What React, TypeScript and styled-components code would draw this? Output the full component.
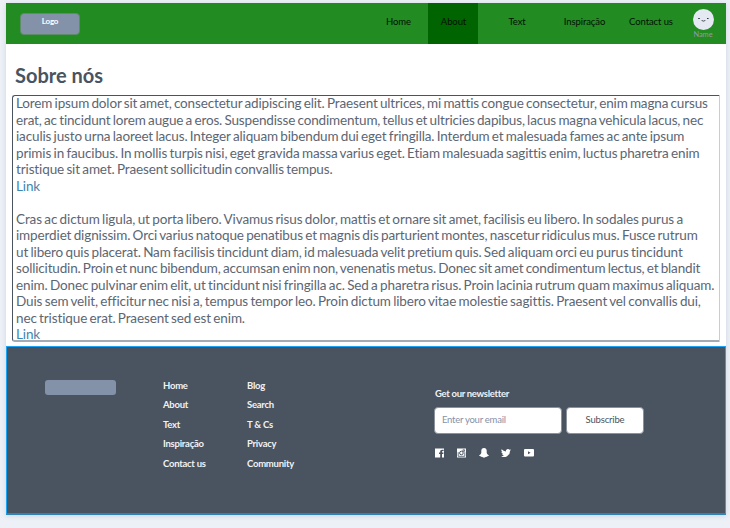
import React from "react";
import styled, { createGlobalStyle } from "styled-components";

const GlobalStyle = createGlobalStyle`
  * { box-sizing: border-box; }
  body { margin: 0; background: #edf1f7; font-family: Lato, "Liberation Sans", sans-serif; color: #4a5360; }
  #root { height: 528px; overflow: hidden; }
  a { text-decoration: none; color: inherit; }
`;

const Page = styled.div`
  width: 720px;
  height: 512px;
  margin: 3px 0 0 6px;
  display: flex;
  flex-direction: column;
  background: #fff;
  box-shadow: 0 1px 5px rgba(100, 115, 150, 0.22);
`;

const Header = styled.header`
  height: 41px;
  flex: none;
  display: flex;
  background: #228b22;
`;

const Logo = styled.div`
  width: 60px;
  height: 22px;
  margin: 10px 0 0 14px;
  border: 1px solid #5c8c68;
  border-radius: 4px;
  background: #8492a9;
  color: #fff;
  font-size: 8px;
  font-weight: 700;
  line-height: 15px;
  text-align: center;
  letter-spacing: -0.2px;
`;

const Nav = styled.nav`
  display: flex;
  margin-left: 288px;
`;

const NavItem = styled.a<{ $width: number; $active?: boolean }>`
  width: ${(p) => p.$width}px;
  height: 41px;
  padding-left: 1px;
  line-height: 37px;
  font-size: 9.5px;
  letter-spacing: -0.1px;
  text-align: center;
  color: #031203;
  background: ${(p) => (p.$active ? "#006400" : "transparent")};
`;

const User = styled.div`
  width: 30px;
  margin: 6px 0 0 0;
  display: flex;
  flex-direction: column;
  align-items: center;
  font-size: 7.4px;
  line-height: 9px;
  color: #8c9bb0;
`;

const Title = styled.h1`
  margin: 18px 0 0 9px;
  height: 33px;
  font-size: 20px;
  line-height: 26px;
  font-weight: 700;
`;

const TextBox = styled.article`
  width: 708px;
  height: 247px;
  margin-left: 6px;
  padding: 0 0 0 3px;
  border: 1px solid #4a5360;
  border-right-color: #c9cdd3;
  border-bottom: 2px solid #a5abb3;
  border-radius: 3px 1px 1px 3px;
  font-size: 13.5px;
  line-height: 15.4px;
  word-spacing: -1px;
  color: #5c6673;
`;

const Line = styled.span<{ $spacing?: number }>`
  display: block;
  width: max-content;
  height: 16.53px;
  white-space: nowrap;
  letter-spacing: ${(p) => p.$spacing ?? -0.12}px;
`;

const TextLink = styled.a`
  display: block;
  height: 16.53px;
  letter-spacing: -0.12px;
  && { color: #3d86b0; }
`;

const Footer = styled.footer`
  height: 169px;
  margin-top: auto;
  flex: none;
  display: flex;
  background: #4a5360;
  border: 1px solid #1ea4f4;
  border-bottom: 2px solid #3182b5;
  color: #f0f2f5;
  font-size: 9.5px;
`;

const FooterLogo = styled.div`
  width: 71px;
  height: 15px;
  margin: 33px 0 0 38px;
  border-radius: 3px;
  background: #8492a9;
`;

const LinkColumn = styled.nav<{ $left: number; $width: number }>`
  width: ${(p) => p.$width}px;
  margin: 28.7px 0 0 ${(p) => p.$left}px;
  display: flex;
  flex-direction: column;
  font-weight: 700;
  line-height: 19.6px;
  letter-spacing: -0.25px;
`;

const Newsletter = styled.section`
  margin: 40px 0 0 103px;
`;

const Label = styled.div`
  margin-left: 1px;
  line-height: 14px;
  font-weight: 700;
  letter-spacing: -0.3px;
`;

const Form = styled.div`
  display: flex;
  gap: 4px;
  margin-top: 6px;
`;

const Email = styled.input`
  width: 128px;
  height: 27px;
  padding: 0 7px 2px;
  border: 1px solid #8b929c;
  border-radius: 4px;
  background: #fff;
  font: 9.5px Lato, sans-serif;
  letter-spacing: -0.25px;
  outline: none;
  &::placeholder { color: #8492a9; opacity: 1; }
`;

const Subscribe = styled.button`
  width: 78px;
  height: 27px;
  padding: 0 0 2px;
  border: 1px solid #8b929c;
  border-radius: 4px;
  background: #fff;
  color: #4a5360;
  font: 9.5px Lato, sans-serif;
  letter-spacing: -0.18px;
`;

const Social = styled.div`
  display: flex;
  justify-content: space-between;
  width: 99px;
  margin: 14px 0 0 1px;
  svg { display: block; }
`;

const nav = [
  { label: "Home", width: 60 },
  { label: "About", width: 50, active: true },
  { label: "Text", width: 77 },
  { label: "Inspiração", width: 58 },
  { label: "Contact us", width: 75 },
];

const first = [
  { text: "Lorem ipsum dolor sit amet, consectetur adipiscing elit. Praesent ultrices, mi mattis congue consectetur, enim magna cursus", spacing: -0.144 },
  { text: "erat, ac tincidunt lorem augue a eros. Suspendisse condimentum, tellus et ultricies dapibus, lacus magna vehicula lacus, nec", spacing: -0.149 },
  { text: "iaculis justo urna laoreet lacus. Integer aliquam bibendum dui eget fringilla. Interdum et malesuada fames ac ante ipsum", spacing: -0.134 },
  { text: "primis in faucibus. In mollis turpis nisi, eget gravida massa varius eget. Etiam malesuada sagittis enim, luctus pharetra enim" },
  { text: "tristique sit amet. Praesent sollicitudin convallis tempus." },
];
const second = [
  { text: "Cras ac dictum ligula, ut porta libero. Vivamus risus dolor, mattis et ornare sit amet, facilisis eu libero. In sodales purus a", spacing: -0.1 },
  { text: "imperdiet dignissim. Orci varius natoque penatibus et magnis dis parturient montes, nascetur ridiculus mus. Fusce rutrum" },
  { text: "ut libero quis placerat. Nam facilisis tincidunt diam, id malesuada velit pretium quis. Sed aliquam orci eu purus tincidunt" },
  { text: "sollicitudin. Proin et nunc bibendum, accumsan enim non, venenatis metus. Donec sit amet condimentum lectus, et blandit", spacing: -0.165 },
  { text: "enim. Donec pulvinar enim elit, ut tincidunt nisi fringilla ac. Sed a pharetra risus. Proin lacinia rutrum quam maximus aliquam.", spacing: -0.115 },
  { text: "Duis sem velit, efficitur nec nisi a, tempus tempor leo. Proin dictum libero vitae molestie sagittis. Praesent vel convallis dui,", spacing: -0.115 },
  { text: "nec tristique erat. Praesent sed est enim." },
];

const Avatar = () => (
  <svg width="21" height="21" viewBox="0 0 21 21">
    <circle cx="10.5" cy="10.5" r="10.5" fill="#e4e9f2" />
    <path d="M5.2 9.5h1.6M14 9.5h1.6" stroke="#30363e" strokeWidth="1.2" />
    <path d="M8.7 11c.4 1.5 3.1 1.5 3.6 0" fill="none" stroke="#30363e" strokeWidth=".9" />
  </svg>
);

const Facebook = () => (
  <svg width="9" height="10" viewBox="0 0 9 10" fill="#fff">
    <path d="M0 .5h9v9H7V6h1.3l.2-1.5H7v-.8c0-.5.2-.7.8-.7h.8V1.7H7.2C5.9 1.7 5.2 2.4 5.2 3.5v1H4V6h1.2v3.5H0z" />
  </svg>
);
const Instagram = () => (
  <svg width="9" height="10" viewBox="0 0 9 10">
    <path d="M0 .5h9v9H0z" fill="#fff" />
    <path d="M1.2 4.2v4.1h6.6V4.2M5.9 1.8h1.7v1.5H5.9z" fill="none" stroke="#4a5360" strokeWidth=".8" />
    <circle cx="4.4" cy="5" r="1.8" fill="none" stroke="#4a5360" strokeWidth="1" />
  </svg>
);
const Snapchat = () => (
  <svg width="10" height="10" viewBox="0 0 10 10" fill="#fff">
    <path d="M5 0C3.2 0 2.3 1.2 2.3 2.7v2C2.1 6 1.3 6.7.3 7.2c-.4.4.3.8 1.1.9.2.8.5.9 1.3.7C3.5 8.7 4 9.7 5 9.7s1.5-1 2.3-.9c.8.2 1.1.1 1.3-.7.8-.1 1.5-.5 1.1-.9-1-.5-1.8-1.2-2-2.5v-2C7.7 1.2 6.8 0 5 0z" />
  </svg>
);
const Twitter = () => (
  <svg width="10" height="10" viewBox="0 0 24 24" fill="#fff">
    <path d="M24 4.6c-.9.4-1.8.7-2.8.8 1-.6 1.8-1.6 2.2-2.7-1 .6-2 1-3.1 1.2A4.9 4.9 0 0 0 11.9 8.4 14 14 0 0 1 1.7 3.2a4.9 4.9 0 0 0 1.5 6.5c-.8 0-1.6-.2-2.2-.6v.1c0 2.3 1.6 4.3 3.9 4.8-.7.2-1.5.2-2.2.1.6 2 2.4 3.4 4.6 3.4A9.9 9.9 0 0 1 0 19.5 14 14 0 0 0 21.5 7.1c1-.7 1.8-1.6 2.5-2.5z" />
  </svg>
);
const Youtube = () => (
  <svg width="10" height="10" viewBox="0 0 10 10">
    <rect y="1" width="10" height="7.5" rx="1" fill="#fff" />
    <path d="M4 3.2v3l2.6-1.5z" fill="#4a5360" />
  </svg>
);

export default function App() {
  return (
    <>
      <GlobalStyle />
      <Page>
        <Header>
          <Logo>Logo</Logo>
          <Nav>
            {nav.map((n) => (
              <NavItem key={n.label} $width={n.width} $active={n.active}>{n.label}</NavItem>
            ))}
          </Nav>
          <User><Avatar />Name</User>
        </Header>
        <Title>Sobre nós</Title>
        <TextBox>
          {first.map((l) => <Line key={l.text} $spacing={l.spacing}>{l.text}</Line>)}
          <TextLink>Link</TextLink>
          <Line />
          {second.map((l) => <Line key={l.text} $spacing={l.spacing}>{l.text}</Line>)}
          <TextLink>Link</TextLink>
        </TextBox>
        <Footer>
          <FooterLogo />
          <LinkColumn $left={47} $width={84}>
            {nav.map((n) => <a key={n.label}>{n.label}</a>)}
          </LinkColumn>
          <LinkColumn $left={0} $width={84}>
            {["Blog", "Search", "T & Cs", "Privacy", "Community"].map((t) => <a key={t}>{t}</a>)}
          </LinkColumn>
          <Newsletter>
            <Label>Get our newsletter</Label>
            <Form>
              <Email placeholder="Enter your email" />
              <Subscribe>Subscribe</Subscribe>
            </Form>
            <Social><Facebook /><Instagram /><Snapchat /><Twitter /><Youtube /></Social>
          </Newsletter>
        </Footer>
      </Page>
    </>
  );
}
